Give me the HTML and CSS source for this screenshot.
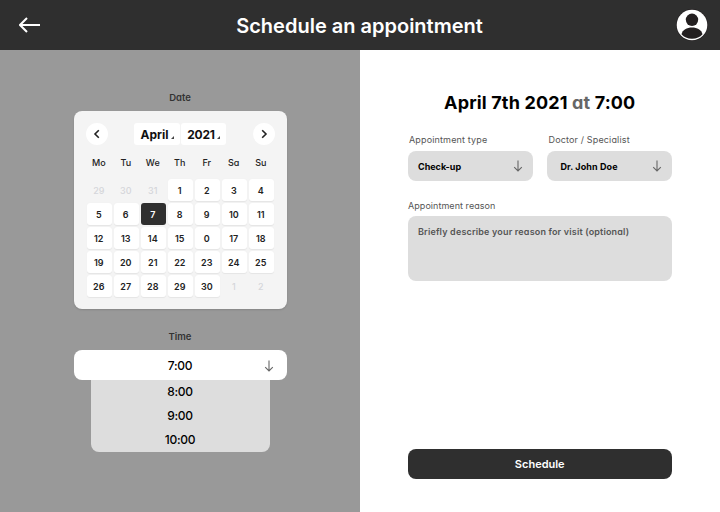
FILE: index.html
```html
<!DOCTYPE html>
<html lang="en">
<head>
<meta charset="utf-8">
<title>Schedule an appointment</title>
<link rel="stylesheet" href="styles.css">
</head>
<body>
<header class="topbar">
  <svg class="back" width="22" height="16" viewBox="0 0 22 16"><path d="M21 8H1.5M8 1L1 8l7 7" fill="none" stroke="#fff" stroke-width="2"/></svg>
  <h1>Schedule an appointment</h1>
  <svg class="avatar" width="32" height="32" viewBox="0 0 32 32"><circle cx="16" cy="16" r="15.900" fill="#231f20"/><circle cx="16" cy="16" r="15.300" fill="#fff"/><circle cx="16" cy="10.800" r="6.200" fill="#231f20"/><path d="M5.500 25.200C6.500 20.800 10.800 18.500 16 18.500s9.500 2.300 10.500 6.700C24 28 20.500 29.800 16 29.800S8 28 5.500 25.200Z" fill="#231f20"/></svg>
</header>
<main>
  <section class="pick">
    <h2 class="cap">Date</h2>
    <div class="calendar">
      <div class="nav">
        <button class="round"><svg width="8" height="10" viewBox="0 0 8 10"><path d="M5.800 1.200L2 5l3.800 3.800" fill="none" stroke="#222" stroke-width="1.600"/></svg></button>
        <div class="selects">
          <button class="sel month"><span>April</span><i></i></button>
          <button class="sel year"><span>2021</span><i></i></button>
        </div>
        <button class="round"><svg width="8" height="10" viewBox="0 0 8 10"><path d="M2.200 1.200L6 5 2.200 8.800" fill="none" stroke="#222" stroke-width="1.600"/></svg></button>
      </div>
      <div class="week"><span>Mo</span><span>Tu</span><span>We</span><span>Th</span><span>Fr</span><span>Sa</span><span>Su</span></div>
      <div class="days">
        <span class="out">29</span><span class="out">30</span><span class="out">31</span><span>1</span><span>2</span><span>3</span><span>4</span>
        <span>5</span><span>6</span><span class="on">7</span><span>8</span><span>9</span><span>10</span><span>11</span>
        <span>12</span><span>13</span><span>14</span><span>15</span><span>0</span><span>17</span><span>18</span>
        <span>19</span><span>20</span><span>21</span><span>22</span><span>23</span><span>24</span><span>25</span>
        <span>26</span><span>27</span><span>28</span><span>29</span><span>30</span><span class="out">1</span><span class="out">2</span>
      </div>
    </div>
    <h2 class="cap time-cap">Time</h2>
    <div class="time"><span>7:00</span><svg class="down" width="10" height="12" viewBox="0 0 10 12"><path d="M5 .5v10.300M1.200 7.200L5 11l3.800-3.800" fill="none" stroke="#666" stroke-width="1.100"/></svg></div>
    <div class="options"><span>8:00</span><span>9:00</span><span>10:00</span></div>
  </section>
  <section class="details">
    <h2 class="when"><span>April 7th 2021 <em>at</em> 7:00</span></h2>
    <div class="fields">
      <div class="field"><label class="l-type">Appointment type</label>
        <div class="box"><span class="v-type">Check-up</span><svg width="10" height="12" viewBox="0 0 10 12"><path d="M5 .5v10.300M1.200 7.200L5 11l3.800-3.800" fill="none" stroke="#666" stroke-width="1.100"/></svg></div></div>
      <div class="field"><label class="l-doc">Doctor / Specialist</label>
        <div class="box doc"><span class="v-doc">Dr. John Doe</span><svg width="10" height="12" viewBox="0 0 10 12"><path d="M5 .5v10.300M1.200 7.200L5 11l3.800-3.800" fill="none" stroke="#666" stroke-width="1.100"/></svg></div></div>
    </div>
    <label class="l-reason">Appointment reason</label>
    <div class="reason"><span>Briefly describe your reason for visit (optional)</span></div>
    <button class="submit">Schedule</button>
  </section>
</main>
</body>
</html>
```
FILE: styles.css
```css
* { box-sizing: border-box; margin: 0; padding: 0; }
body { width: 720px; height: 512px; overflow: hidden; font-family: Inter, "Liberation Sans", sans-serif; color: #000; background: #fff; }
button { border: 0; font: inherit; background: none; }
svg { display: block; flex: none; }
.topbar { height: 50px; background: #2f2f2f; display: flex; align-items: center; justify-content: space-between; padding: 0 12px 0 19px; }
h1 { color: #fff; font-size: 20px; font-weight: 600; line-height: 24px; white-space: nowrap; margin-left: 2px; padding-top: 1px; }
main { display: flex; height: 462px; font-feature-settings: "cv11"; }
.pick { width: 360px; background: #999; display: flex; flex-direction: column; align-items: center; padding-top: 42px; }
.cap { font-size: 9.500px; line-height: 12px; font-weight: 600; color: #333; }
.calendar { width: 213px; height: 198px; margin-top: 7px; padding: 12px 13px; border-radius: 8px; background: #f4f4f4; box-shadow: 0 1px 2px #0002; }
.nav { display: flex; justify-content: space-between; align-items: center; height: 22px; margin: 0 -1px; }
.round { width: 22px; height: 22px; border-radius: 50%; background: #fff; display: flex; align-items: center; justify-content: center; }
.selects { display: flex; gap: 1px; }
.sel { height: 22px; background: #fff; border-radius: 3px; display: flex; align-items: center; justify-content: center; gap: 2px; color: #111; font-size: 12px; font-weight: 700; }
.month { width: 46px; }
.year { width: 45px; }
.year span { letter-spacing: -.2px; }
.sel i { border-left: 3px solid transparent; border-bottom: 3px solid #444; margin-top: 7px; }
.week { display: grid; grid-template-columns: repeat(7, 25px); gap: 2px; height: 34px; padding-top: 1px; line-height: 34px; text-align: center; font-size: 9px; font-weight: 500; color: #222; }
.week span, .days span { text-indent: -.5px; }
.days { display: grid; grid-template-columns: repeat(7, 25px); grid-auto-rows: 22px; gap: 2px; line-height: 23px; text-align: center; font-size: 9px; font-weight: 600; color: #222; }
.days span { background: #fff; border-radius: 3px; box-shadow: 0 .5px 1px #00000010; }
.days .out { background: none; box-shadow: none; color: #d5d6da; font-weight: 500; }
.days .on { background: #2f2f2f; color: #fff; box-shadow: none; }
.time-cap { margin-top: 22px; }
.time { width: 213px; height: 30px; margin-top: 7px; border-radius: 8px; background: #fff; display: flex; align-items: center; justify-content: center; font-size: 12px; font-weight: 500; letter-spacing: -.3px; position: relative; }
.down { position: absolute; right: 13px; top: 10px; }
.options { width: 179px; height: 72px; background: #ddd; border-radius: 0 0 8px 8px; display: flex; flex-direction: column; text-align: center; font-size: 12px; line-height: 24px; font-weight: 500; letter-spacing: -.3px; }
.details { width: 360px; padding: 40px 48.500px 0 48px; display: flex; flex-direction: column; }
.when { font-size: 18px; line-height: 26px; font-weight: 700; text-align: center; white-space: nowrap; letter-spacing: .15px; }
.when em { font-style: normal; color: #666; }
.fields { display: flex; justify-content: space-between; margin-top: 18px; }
.field { width: 125px; }
label { display: block; font-size: 9px; line-height: 12px; color: #555; white-space: nowrap; letter-spacing: .15px; }
.field label { padding-left: 1px; }
.box { height: 30px; margin-top: 5px; background: #ddd; border-radius: 8px; display: flex; align-items: center; justify-content: space-between; padding: 0 10px; font-size: 9px; font-weight: 700; white-space: nowrap; }
.field .l-doc { padding-left: 2px; }
.v-doc { letter-spacing: .1px; }
.doc { padding-left: 14px; }
.l-reason { margin-top: 19px; letter-spacing: .05px; }
.reason { height: 65px; margin-top: 4px; padding: 10px; border-radius: 8px; background: #ddd; font-size: 9px; line-height: 12px; font-weight: 600; color: #555; white-space: nowrap; letter-spacing: .17px; }
.submit { height: 30px; margin-top: 168px; border-radius: 8px; background: #2f2f2f; color: #fff; font-size: 11px; font-weight: 600; }
```
